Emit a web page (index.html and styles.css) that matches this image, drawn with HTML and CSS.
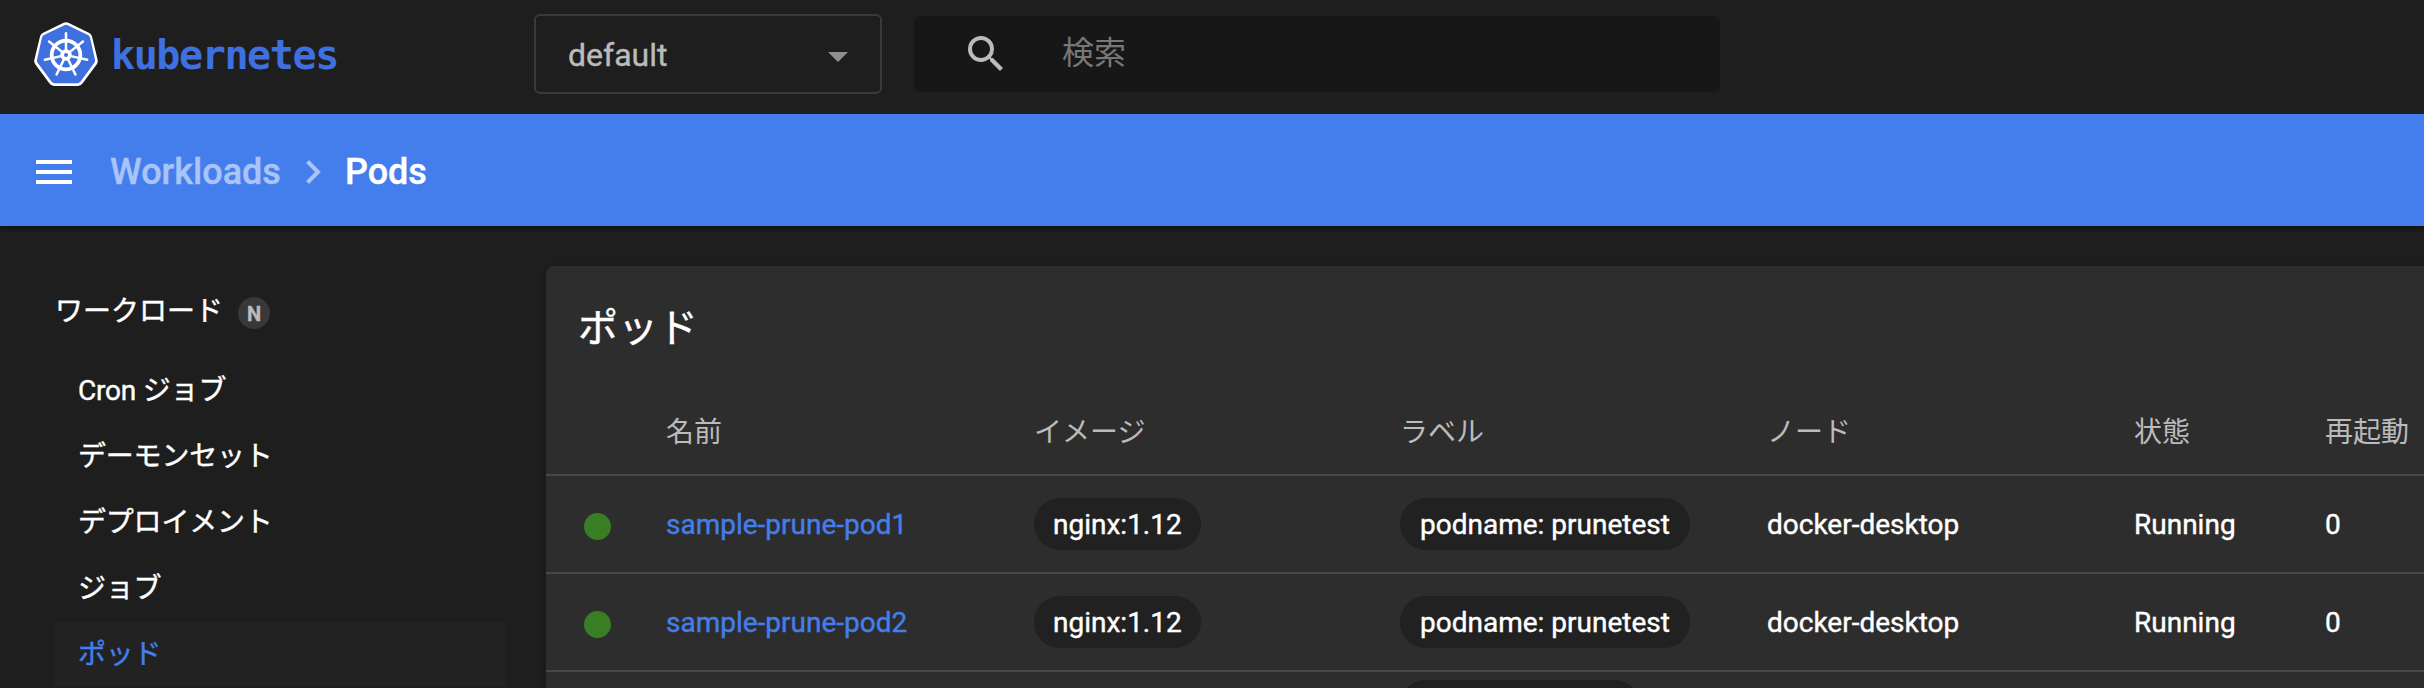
FILE: index.html
```html
<!DOCTYPE html>
<html lang="ja">
<head>
<meta charset="utf-8">
<title>Kubernetes Dashboard</title>
<link rel="stylesheet" href="styles.css">
</head>
<body>
<header class="topbar">
  <a class="brand">
    <svg class="brand-logo" viewBox="0 0 64 64" width="64" height="64">
      <path d="M29.6 .8 Q32 -.4 34.4 .8 L55.3 10.9 Q57.4 12 58 14.4 L63.7 38 Q64.2 40.4 62.6 42.4 L48.7 61.2 Q46.8 64 44 64 L20 64 Q17.2 64 15.3 61.2 L1.4 42.4 Q-.2 40.4 .3 38 L6 14.4 Q6.6 12 8.7 10.9 Z" fill="#fff"/>
      <path d="M30.4 3.2 Q32 2.4 33.6 3.2 L54 13 Q55.6 13.8 56 15.6 L61 37.8 Q61.4 39.6 60.2 41.1 L46.6 59.6 Q45.2 61.3 43.4 61.3 L20.6 61.3 Q18.8 61.3 17.4 59.6 L3.8 41.1 Q2.6 39.6 3 37.8 L8 15.6 Q8.4 13.8 10 13 Z" fill="#3f70df"/>
      <g fill="none" stroke="#fff" stroke-linecap="round">
        <circle cx="32" cy="33" r="14.3" stroke-width="3.8"/>
        <g stroke-width="2.5">
          <path d="M32 28V11.3"/>
          <path d="M32 28V11.3" transform="rotate(51.43 32 33)"/>
          <path d="M32 28V11.3" transform="rotate(102.86 32 33)"/>
          <path d="M32 28V11.3" transform="rotate(154.29 32 33)"/>
          <path d="M32 28V11.3" transform="rotate(205.71 32 33)"/>
          <path d="M32 28V11.3" transform="rotate(257.14 32 33)"/>
          <path d="M32 28V11.3" transform="rotate(308.57 32 33)"/>
        </g>
        <circle cx="32" cy="33" r="3.9" stroke-width="3.8"/>
      </g>
    </svg>
    <span class="brand-name">kubernetes</span>
  </a>
  <div class="namespace">
    <span>default</span>
    <svg width="20" height="10" viewBox="0 0 20 10"><path d="M0 0h20L10 10z" fill="#8e8e8e"/></svg>
  </div>
  <div class="search">
    <svg width="48" height="48" viewBox="0 0 24 24"><path fill="#bbb" d="M15.5 14h-.79l-.28-.27A6.471 6.471 0 0 0 16 9.5 6.5 6.5 0 1 0 9.5 16c1.61 0 3.09-.59 4.23-1.57l.27.28v.79l5 4.99L20.49 19l-4.99-5zm-6 0C7.01 14 5 11.99 5 9.5S7.01 5 9.5 5 14 7.01 14 9.5 11.99 14 9.5 14z"/></svg>
    <span class="placeholder">検索</span>
  </div>
</header>
<nav class="crumbs">
  <svg class="menu" width="36" height="24" viewBox="0 0 36 24"><path fill="#fff" d="M0 0h36v4H0zM0 10h36v4H0zM0 20h36v4H0z"/></svg>
  <span class="crumb-parent">Workloads</span>
  <svg class="chevron" width="15" height="24" viewBox="0 0 15 24"><path d="M1.5 1.5L12 12 1.5 22.5" fill="none" stroke="#a9c4f7" stroke-width="4"/></svg>
  <span class="crumb-current">Pods</span>
</nav>
<div class="content">
  <aside class="sidebar">
    <div class="group"><span>ワークロード</span><span class="badge">N</span></div>
    <a class="item">Cron ジョブ</a>
    <a class="item">デーモンセット</a>
    <a class="item">デプロイメント</a>
    <a class="item">ジョブ</a>
    <a class="item active">ポッド</a>
  </aside>
  <main class="card">
    <h1 class="card-title">ポッド</h1>
    <div class="row head">
      <span></span><span>名前</span><span>イメージ</span><span>ラベル</span><span>ノード</span><span>状態</span><span>再起動</span>
    </div>
    <div class="row">
      <i class="status"></i><a class="link">sample-prune-pod1</a><span class="chip">nginx:1.12</span><span class="chip">podname: prunetest</span><span>docker-desktop</span><span>Running</span><span>0</span>
    </div>
    <div class="row">
      <i class="status"></i><a class="link">sample-prune-pod2</a><span class="chip">nginx:1.12</span><span class="chip">podname: prunetest</span><span>docker-desktop</span><span>Running</span><span>0</span>
    </div>
    <div class="row next">
      <span></span><span></span><span></span><span class="chip-top"></span>
    </div>
  </main>
</div>
</body>
</html>
```
FILE: styles.css
```css
* { box-sizing: border-box; }
body {
  margin: 0;
  width: 2424px;
  height: 688px;
  overflow: hidden;
  display: flex;
  flex-direction: column;
  background: #1e1e1e;
  color: #fff;
  font: 400 28px/36px Roboto, "Noto Sans CJK JP", sans-serif;
  -webkit-text-stroke: 0.4px;
}
svg { display: block; flex: none; }

.topbar {
  flex: none;
  height: 114px;
  display: flex;
  align-items: flex-start;
}
.brand {
  width: 534px;
  padding: 22px 0 0 34px;
  display: flex;
  gap: 13px;
}
.brand-name {
  padding-top: 1px;
  font: 700 40px/64px "DejaVu Sans Mono", monospace;
  letter-spacing: -1.4px;
  color: #3f70df;
  -webkit-text-stroke: 0;
}
.namespace {
  width: 348px;
  height: 80px;
  margin: 14px 32px 0 0;
  padding: 0 32px;
  border: 2px solid #3a3a3a;
  border-radius: 6px;
  display: flex;
  align-items: center;
  justify-content: space-between;
  font-size: 32px;
  color: #bbb;
}
.namespace span { padding-top: 2px; }
.namespace svg { margin-top: 6px; }
.search {
  width: 806px;
  height: 76px;
  margin-top: 16px;
  padding-left: 48px;
  border-radius: 6px;
  background: #171717;
  display: flex;
  align-items: center;
  gap: 52px;
}
.placeholder {
  padding-bottom: 3px;
  font-size: 32px;
  color: #777;
  -webkit-text-stroke: 0;
}

.crumbs {
  flex: none;
  height: 112px;
  padding: 4px 0 0 36px;
  background: #447eec;
  box-shadow: 0 3px 4px rgba(0, 0, 0, .45);
  clip-path: inset(0 0 -12px 0);
  display: flex;
  align-items: center;
  font-size: 36px;
  font-weight: 500;
}
.crumb-parent { margin-left: 38px; color: #a9c4f7; }
.chevron { margin: 0 24px 0 25px; }

.content {
  flex: 1;
  min-height: 0;
  display: flex;
}
.sidebar {
  flex: none;
  width: 546px;
  padding: 66px 40px 0 54px;
}
.group {
  height: 40px;
  margin-bottom: 26px;
  padding-left: 1px;
  display: flex;
  align-items: center;
  gap: 15px;
}
.badge {
  width: 32px;
  height: 32px;
  margin-top: 2px;
  border-radius: 50%;
  background: #383838;
  color: #bbb;
  font-size: 20px;
  line-height: 34px;
  font-weight: 700;
  text-align: center;
}
.item {
  display: flex;
  align-items: center;
  height: 64px;
  margin-bottom: 2px;
  padding: 1px 0 0 24px;
  border-radius: 4px;
  letter-spacing: -0.2px;
}
.item.active {
  margin-bottom: 0;
  background: #222;
  color: #447eec;
}

.card {
  flex: none;
  width: 1878px;
  margin-top: 40px;
  border-radius: 8px 0 0;
  background: #2d2d2d;
  box-shadow: 0 2px 6px rgba(0, 0, 0, .3);
}
.card-title {
  height: 120px;
  margin: 0;
  padding-left: 32px;
  font-size: 40px;
  line-height: 126px;
  font-weight: 400;
}
.row {
  height: 98px;
  padding: 2px 0 0 38px;
  border-bottom: 2px solid #484848;
  display: grid;
  grid-template-columns: 82px 368px 366px 367px 367px 191px 1fr;
  align-items: center;
  justify-items: start;
}
.head {
  height: 90px;
  padding-top: 6px;
  color: #bbb;
  -webkit-text-stroke: 0;
}
.status {
  width: 27px;
  height: 27px;
  margin-top: 2px;
  border-radius: 50%;
  background: #387f23;
}
.link { color: #447eec; }
.chip {
  height: 52px;
  margin-top: -2px;
  padding: 0 20px;
  border-radius: 26px;
  background: #212121;
  line-height: 54px;
}
.chip:nth-child(3) { padding: 0 19px; }
.next {
  height: 16px;
  padding-top: 8px;
  border: 0;
  align-items: start;
}
.chip-top {
  width: 240px;
  height: 8px;
  background: radial-gradient(circle at 26px 26px, #212121 26px, transparent 26.5px) left / 26px 8px no-repeat,
    radial-gradient(circle at 0 26px, #212121 26px, transparent 26.5px) right / 26px 8px no-repeat,
    linear-gradient(#212121, #212121) center / 188px 8px no-repeat;
}
```
